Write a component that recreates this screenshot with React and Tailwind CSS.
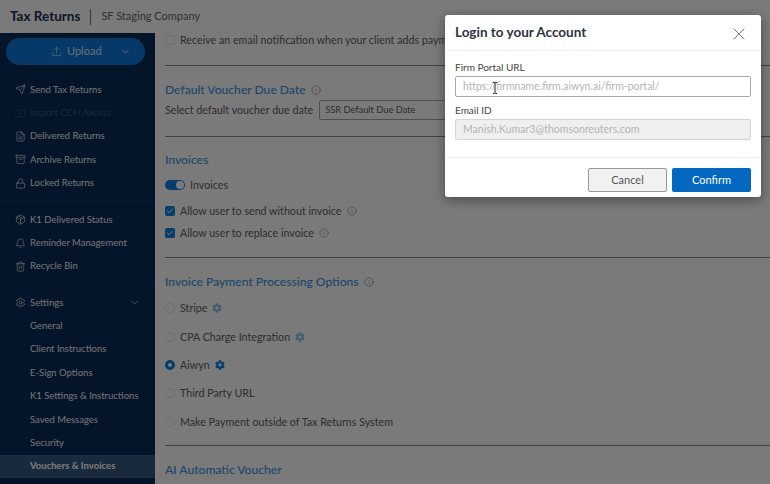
import { ChevronDown, Info, Settings, Upload, Send, Import, FileText, Archive, Lock, Bell, Trash2, X, Check, Package } from 'lucide-react';
import { FaCog } from 'react-icons/fa';

const FONT = "font-['Lato','Noto_Sans',sans-serif]";

function NavItem({ icon: Icon, label, dim }) {
  return (
    <div className={`flex items-center h-[23.4px] pl-[15px] text-[9.5px] ${dim ? 'text-[#34588a]' : 'text-[#eef2f6]'}`}>
      <span className="w-[15px] flex justify-start shrink-0">
        <Icon size={11} strokeWidth={1.4} />
      </span>
      <span className="whitespace-nowrap">{label}</span>
    </div>
  );
}

function SubItem({ label, active }) {
  return (
    <div className={`flex items-center h-[23.4px] pl-[30px] text-[9.5px] whitespace-nowrap ${active ? 'bg-[#385880] text-white font-bold' : 'text-[#eef2f6]'}`}>
      {label}
    </div>
  );
}

function Sidebar() {
  return (
    <aside className="w-[155px] shrink-0 bg-[#0a2a56] flex flex-col pt-[5px]">
      <div className="ml-[6px] mr-[10px] h-[27px] rounded-full bg-[#0e78d8] flex items-center text-[#d8e6f2] text-[11px]">
        <Upload size={11} strokeWidth={1.4} className="ml-[45px]" />
        <span className="ml-[5px]">Upload</span>
        <ChevronDown size={11} strokeWidth={2} className="ml-[18px]" />
      </div>
      <div className="mt-[13px]">
        <NavItem icon={Send} label="Send Tax Returns" />
        <NavItem icon={Import} label="Import CCH Axcess" dim />
        <NavItem icon={FileText} label="Delivered Returns" />
        <NavItem icon={Archive} label="Archive Returns" />
        <NavItem icon={Lock} label="Locked Returns" />
      </div>
      <div className="h-px bg-[#143a6a] my-[6px]" />
      <div>
        <NavItem icon={Package} label="K1 Delivered Status" />
        <NavItem icon={Bell} label="Reminder Management" />
        <NavItem icon={Trash2} label="Recycle Bin" />
      </div>
      <div className="h-px bg-[#143a6a] my-[6px]" />
      <div className="relative">
        <NavItem icon={Settings} label="Settings" />
        <ChevronDown size={13} strokeWidth={1.2} className="absolute right-[14px] top-[5px] text-[#eef2f6]" />
      </div>
      <SubItem label="General" />
      <SubItem label="Client Instructions" />
      <SubItem label="E-Sign Options" />
      <SubItem label="K1 Settings & Instructions" />
      <SubItem label="Saved Messages" />
      <SubItem label="Security" />
      <SubItem label="Vouchers & Invoices" active />
    </aside>
  );
}

function Heading({ children, info, className = '' }) {
  return (
    <div className={`flex items-center gap-[5px] h-[18px] text-[12.1px] font-medium text-[#3a95dd] whitespace-nowrap ${className}`}>
      {children}
      {info && <Info size={10} strokeWidth={1.2} className="text-[#606060]" />}
    </div>
  );
}

function CheckRow({ label, info, className = '' }) {
  return (
    <div className={`flex items-center text-[10.7px] h-[14px] whitespace-nowrap ${className}`}>
      <span className="w-[10px] h-[10px] rounded-[2px] bg-[#0e80e0] flex items-center justify-center text-white">
        <Check size={8} strokeWidth={3} />
      </span>
      <span className="ml-[5px]">{label}</span>
      {info && <Info size={10} strokeWidth={1.2} className="ml-[5px] text-[#707070]" />}
    </div>
  );
}

function RadioRow({ label, gear, on, className = '' }) {
  return (
    <div className={`flex items-center text-[10.7px] h-[14px] whitespace-nowrap ${className}`}>
      <span className={`w-[10px] h-[10px] rounded-full ${on ? 'border-[3px] border-[#0e80e0] bg-white' : 'border border-[#e6e6e6] bg-white'}`} />
      <span className="ml-[5px]">{label}</span>
      {gear && <FaCog size={10} className={`ml-[5px] ${on ? 'text-[#0e80e0]' : 'text-[#8cc8f0]'}`} />}
    </div>
  );
}

function Main() {
  return (
    <main className="flex-1 min-w-0 bg-white pl-[10px] text-[#606060]">
      <div className="flex items-center text-[10.7px] h-[14px] whitespace-nowrap">
        <span className="w-[10px] h-[10px] rounded-[2px] border border-[#e6e6e6] bg-white" />
        <span className="ml-[5px]">Receive an email notification when your client adds payment</span>
      </div>
      <div className="h-px bg-[#8a8a8a] mt-[18px]" />
      <Heading info className="mt-[15px]">Default Voucher Due Date</Heading>
      <div className="flex items-center mt-[1px] text-[10.7px] whitespace-nowrap">
        <span>Select default voucher due date</span>
        <div className="ml-[6px] w-[300px] h-[20px] border border-[#a5a5a5] rounded-[2px] flex items-center pl-[5px] text-[9.3px]">SSR Default Due Date</div>
      </div>
      <div className="h-px bg-[#8a8a8a] mt-[16px]" />
      <Heading className="mt-[14px]">Invoices</Heading>
      <div className="flex items-center text-[10.7px] mt-[8px]">
        <span className="w-[20px] h-[10px] rounded-full bg-[#0e80e0] flex justify-end items-center pr-[1px]">
          <span className="w-[8px] h-[8px] rounded-full bg-white" />
        </span>
        <span className="ml-[5px]">Invoices</span>
      </div>
      <CheckRow label="Allow user to send without invoice" info className="mt-[11px]" />
      <CheckRow label="Allow user to replace invoice" info className="mt-[8px]" />
      <div className="h-px bg-[#8a8a8a] mt-[17px]" />
      <Heading info className="mt-[15px]">Invoice Payment Processing Options</Heading>
      <RadioRow label="Stripe" gear className="mt-[10px]" />
      <RadioRow label="CPA Charge Integration" gear className="mt-[15px]" />
      <RadioRow label="Aiwyn" gear on className="mt-[14px]" />
      <RadioRow label="Third Party URL" className="mt-[14px]" />
      <RadioRow label="Make Payment outside of Tax Returns System" className="mt-[15px]" />
      <div className="h-px bg-[#8a8a8a] mt-[16px]" />
      <Heading className="mt-[15px]">AI Automatic Voucher</Heading>
    </main>
  );
}

function LoginDialog() {
  return (
    <div className="absolute left-[445px] top-[15px] w-[316px] bg-white rounded-[3px] shadow-[0_3px_12px_rgba(0,0,0,0.4)]">
      <div className="h-[36px] pl-[10px] pr-[12px] flex items-center justify-between border-b border-[#efefef]">
        <span className="text-[13.5px] font-bold text-[#2c3440]">Login to your Account</span>
        <X size={20} strokeWidth={1.1} className="text-[#6b6b6b] mt-[2px]" />
      </div>
      <div className="px-[10px] pt-[9px] pb-[17px] text-[10px] text-[#444]">
        <div>Firm Portal URL</div>
        <div className="relative mt-[1px] h-[21px] border border-[#a9a9a9] rounded-[2px] flex items-center pl-[7px] text-[#b5b5b5] text-[10.5px]">
          https://firmname.firm.aiwyn.ai/firm-portal/
          <svg viewBox="0 0 6 12" width="6" height="12" className="absolute left-[36px] top-[5px] text-[#222]" fill="none" stroke="currentColor" strokeWidth="1">
            <path d="M1 .5h1.2L3 1.2 3.8.5H5M3 1.2v9.6M1 11.5h1.2l.8-.7.8.7H5" />
          </svg>
        </div>
        <div className="mt-[6px]">Email ID</div>
        <div className="mt-[1px] h-[21px] border border-[#d5d5d5] bg-[#efefef] rounded-[2px] flex items-center pl-[7px] text-[#b5b5b5] text-[10.5px]">
          Manish.Kumar3@thomsonreuters.com
        </div>
      </div>
      <div className="border-t border-[#efefef] h-[40px] px-[10px] pt-[10px] flex items-start justify-end gap-[5px] text-[11px]">
        <button className="w-[79px] h-[24px] bg-[#f1f1f1] border border-[#9a9a9a] rounded-[2px] text-[#555]">Cancel</button>
        <button className="w-[79px] h-[24px] bg-[#0568c0] rounded-[2px] text-white">Confirm</button>
      </div>
    </div>
  );
}

export default function App() {
  return (
    <div className={`relative w-[770px] h-[484px] overflow-hidden flex flex-col bg-white ${FONT}`}>
      <header className="h-[33px] shrink-0 bg-white flex items-center pl-[10px] whitespace-nowrap">
        <span className="text-[13.5px] font-bold text-[#1c3350]">Tax Returns</span>
        <span className="w-px h-[16px] bg-[#777] mx-[10px]" />
        <span className="text-[11px] text-[#666]">SF Staging Company</span>
      </header>
      <div className="flex flex-1 min-h-0">
        <Sidebar />
        <Main />
      </div>
      <div className="absolute inset-0 bg-black/[0.52]" />
      <LoginDialog />
    </div>
  );
}
